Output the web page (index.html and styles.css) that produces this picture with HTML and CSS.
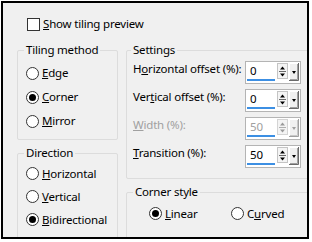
FILE: index.html
```html
<!DOCTYPE html>
<html lang="en">
<head>
    <meta charset="UTF-8">
    <meta name="viewport" content="width=device-width, initial-scale=1.0">
    <title>Tiling</title>
    <link rel="stylesheet" href="styles.css">
</head>
<body>
    <div class="frame">
        <label class="check-row">
            <span class="checkbox"></span>
            <span><u>S</u>how tiling preview</span>
        </label>

        <div class="columns">
            <div class="col-left">
                <div class="group method">
                    <div class="group-title">Tiling method</div>
                    <div class="radio-row"><span class="radio"></span><span><u>E</u>dge</span></div>
                    <div class="radio-row"><span class="radio on"></span><span><u>C</u>orner</span></div>
                    <div class="radio-row"><span class="radio"></span><span><u>M</u>irror</span></div>
                </div>

                <div class="group direction">
                    <div class="group-title">Direction</div>
                    <div class="radio-row"><span class="radio"></span><span><u>H</u>orizontal</span></div>
                    <div class="radio-row"><span class="radio"></span><span><u>V</u>ertical</span></div>
                    <div class="radio-row"><span class="radio on"></span><span><u>B</u>idirectional</span></div>
                </div>
            </div>

            <div class="col-right">
                <div class="group settings">
                    <div class="group-title">Settings</div>
                    <div class="set-row">
                        <span class="set-label">H<u>o</u>rizontal offset (%):</span>
                        <div class="spin">
                            <span class="field">0</span>
                            <svg class="arrows" width="11" height="16" viewBox="0 0 11 16">
                                <rect x="0.5" y="0.5" width="10" height="15" fill="#f4f4f4" stroke="#c4c4c4"/>
                                <path d="M3 6.5h5L5.5 3.5z" fill="#000"/>
                                <path d="M2 8.5h7" stroke="#6a6a6a"/>
                                <path d="M3 10.5h5l-2.5 3z" fill="#000"/>
                            </svg>
                            <svg class="drop" width="10" height="18" viewBox="0 0 10 18">
                                <rect x="0" y="0" width="10" height="18" fill="#f0f0f0"/>
                                <path d="M0.5 17V0.5H9" fill="none" stroke="#fff"/>
                                <path d="M9.5 0v17.5H0" fill="none" stroke="#6a6a6a"/>
                                <path d="M8.5 1v15.5H1" fill="none" stroke="#a0a0a0"/>
                                <path d="M3 8h4l-2 3z" fill="#000"/>
                            </svg>
                        </div>
                    </div>
                    <div class="set-row">
                        <span class="set-label">Ver<u>t</u>ical offset (%):</span>
                        <div class="spin">
                            <span class="field">0</span>
                            <svg class="arrows" width="11" height="16" viewBox="0 0 11 16">
                                <rect x="0.5" y="0.5" width="10" height="15" fill="#f4f4f4" stroke="#c4c4c4"/>
                                <path d="M3 6.5h5L5.5 3.5z" fill="#000"/>
                                <path d="M2 8.5h7" stroke="#6a6a6a"/>
                                <path d="M3 10.5h5l-2.5 3z" fill="#000"/>
                            </svg>
                            <svg class="drop" width="10" height="18" viewBox="0 0 10 18">
                                <rect x="0" y="0" width="10" height="18" fill="#f0f0f0"/>
                                <path d="M0.5 17V0.5H9" fill="none" stroke="#fff"/>
                                <path d="M9.5 0v17.5H0" fill="none" stroke="#6a6a6a"/>
                                <path d="M8.5 1v15.5H1" fill="none" stroke="#a0a0a0"/>
                                <path d="M3 8h4l-2 3z" fill="#000"/>
                            </svg>
                        </div>
                    </div>
                    <div class="set-row disabled">
                        <span class="set-label"><u>W</u>idth (%):</span>
                        <div class="spin">
                            <span class="field">50</span>
                            <svg class="arrows" width="11" height="16" viewBox="0 0 11 16">
                                <rect x="0.5" y="0.5" width="10" height="15" fill="#f4f4f4" stroke="#d4d4d4"/>
                                <path d="M3 6.5h5L5.5 3.5z" fill="#9a9a9a"/>
                                <path d="M2 8.5h7" stroke="#b0b0b0"/>
                                <path d="M3 10.5h5l-2.5 3z" fill="#9a9a9a"/>
                            </svg>
                            <svg class="drop" width="10" height="18" viewBox="0 0 10 18">
                                <rect x="0" y="0" width="10" height="18" fill="#f0f0f0"/>
                                <path d="M0.5 17V0.5H9" fill="none" stroke="#fff"/>
                                <path d="M9.5 0v17.5H0" fill="none" stroke="#a0a0a0"/>
                                <path d="M8.5 1v15.5H1" fill="none" stroke="#c8c8c8"/>
                                <path d="M3 8h4l-2 3z" fill="#a0a0a0"/>
                            </svg>
                        </div>
                    </div>
                    <div class="set-row last">
                        <span class="set-label"><u>T</u>ransition (%):</span>
                        <div class="spin">
                            <span class="field">50</span>
                            <svg class="arrows" width="11" height="16" viewBox="0 0 11 16">
                                <rect x="0.5" y="0.5" width="10" height="15" fill="#f4f4f4" stroke="#c4c4c4"/>
                                <path d="M3 6.5h5L5.5 3.5z" fill="#000"/>
                                <path d="M2 8.5h7" stroke="#6a6a6a"/>
                                <path d="M3 10.5h5l-2.5 3z" fill="#000"/>
                            </svg>
                            <svg class="drop" width="10" height="18" viewBox="0 0 10 18">
                                <rect x="0" y="0" width="10" height="18" fill="#f0f0f0"/>
                                <path d="M0.5 17V0.5H9" fill="none" stroke="#fff"/>
                                <path d="M9.5 0v17.5H0" fill="none" stroke="#6a6a6a"/>
                                <path d="M8.5 1v15.5H1" fill="none" stroke="#a0a0a0"/>
                                <path d="M3 8h4l-2 3z" fill="#000"/>
                            </svg>
                        </div>
                    </div>
                </div>

                <div class="group corner">
                    <div class="group-title">Corner style</div>
                    <div class="corner-row">
                        <div class="radio-row linear"><span class="radio on"></span><span><u>L</u>inear</span></div>
                        <div class="radio-row"><span class="radio"></span><span>C<u>u</u>rved</span></div>
                    </div>
                </div>
            </div>
        </div>
    </div>
</body>
</html>
```

FILE: styles.css
```css
body {
    margin: 0;
    background: #fff;
    font-family: "Noto Sans", "Open Sans", sans-serif;
    font-size: 11.5px;
    letter-spacing: -0.2px;
    line-height: 16px;
    color: #000;
}
u {
    text-underline-offset: 1px;
}
.frame {
    box-sizing: border-box;
    margin: 1px 0 0 1px;
    width: 308px;
    height: 238px;
    border: 2px solid #000;
    background: #f0f0f0;
    overflow: hidden;
    padding: 13px 0 0 14px;
}
.check-row {
    display: flex;
    align-items: center;
    gap: 3px;
    margin-left: 10px;
    height: 16px;
}
.checkbox {
    box-sizing: border-box;
    width: 13px;
    height: 13px;
    border: 1px solid #333;
    background: #fff;
}
.columns {
    display: flex;
    gap: 8px;
    margin-top: 18px;
    width: 320px;
}
.col-left {
    display: flex;
    flex-direction: column;
    gap: 13px;
    width: 101px;
    flex: none;
}
.col-right {
    display: flex;
    flex-direction: column;
    gap: 13px;
    width: 200px;
    flex: none;
}
.group {
    box-sizing: border-box;
    border: 1px solid #dcdcdc;
    border-radius: 2px;
}
.group-title {
    width: max-content;
    margin: -9px 0 0 0;
    padding: 0 2px;
    background: #f0f0f0;
    line-height: 16px;
}
.method {
    height: 90px;
    padding-left: 8px;
}
.method .group-title {
    margin-left: -2px;
    margin-bottom: 3px;
}
.method .radio-row {
    height: 24px;
}
.direction {
    height: 100px;
    padding-left: 8px;
}
.direction .group-title {
    margin-left: -2px;
    margin-bottom: 1px;
}
.radio-row {
    display: flex;
    align-items: center;
    gap: 3px;
    height: 23px;
}
.radio {
    box-sizing: border-box;
    position: relative;
    width: 13px;
    height: 13px;
    border: 1px solid #333;
    border-radius: 50%;
    background: #fff;
}
.radio.on::after {
    content: "";
    position: absolute;
    left: 2px;
    top: 2px;
    width: 7px;
    height: 7px;
    border-radius: 50%;
    background: #000;
}
.settings {
    height: 129px;
    padding-left: 6px;
}
.settings .group-title {
    margin-left: -2px;
    margin-bottom: 3px;
}
.set-row {
    display: grid;
    grid-template-columns: 112px 56px;
    height: 23px;
    margin-bottom: 5px;
}
.set-row.last {
    margin-top: 1px;
}
.set-label {
    line-height: 16px;
    white-space: nowrap;
}
.disabled .set-label,
.disabled .field {
    color: #a0a0a0;
}
.spin {
    box-sizing: border-box;
    display: flex;
    align-items: flex-start;
    height: 23px;
    padding: 1px;
    border: 1px solid #b4b4b4;
    background: #fff;
}
.field {
    box-sizing: border-box;
    width: 28px;
    height: 18px;
    padding-left: 3px;
    line-height: 16px;
    border-bottom: 2px solid #3c8fe3;
}
.arrows {
    display: block;
    margin-left: 2px;
}
.drop {
    display: block;
    margin-left: 1px;
}
.corner {
    height: 80px;
    padding-left: 6px;
}
.corner .group-title {
    margin-bottom: 2px;
}
.corner-row {
    display: flex;
    padding-left: 16px;
}
.linear {
    width: 82px;
}
```
